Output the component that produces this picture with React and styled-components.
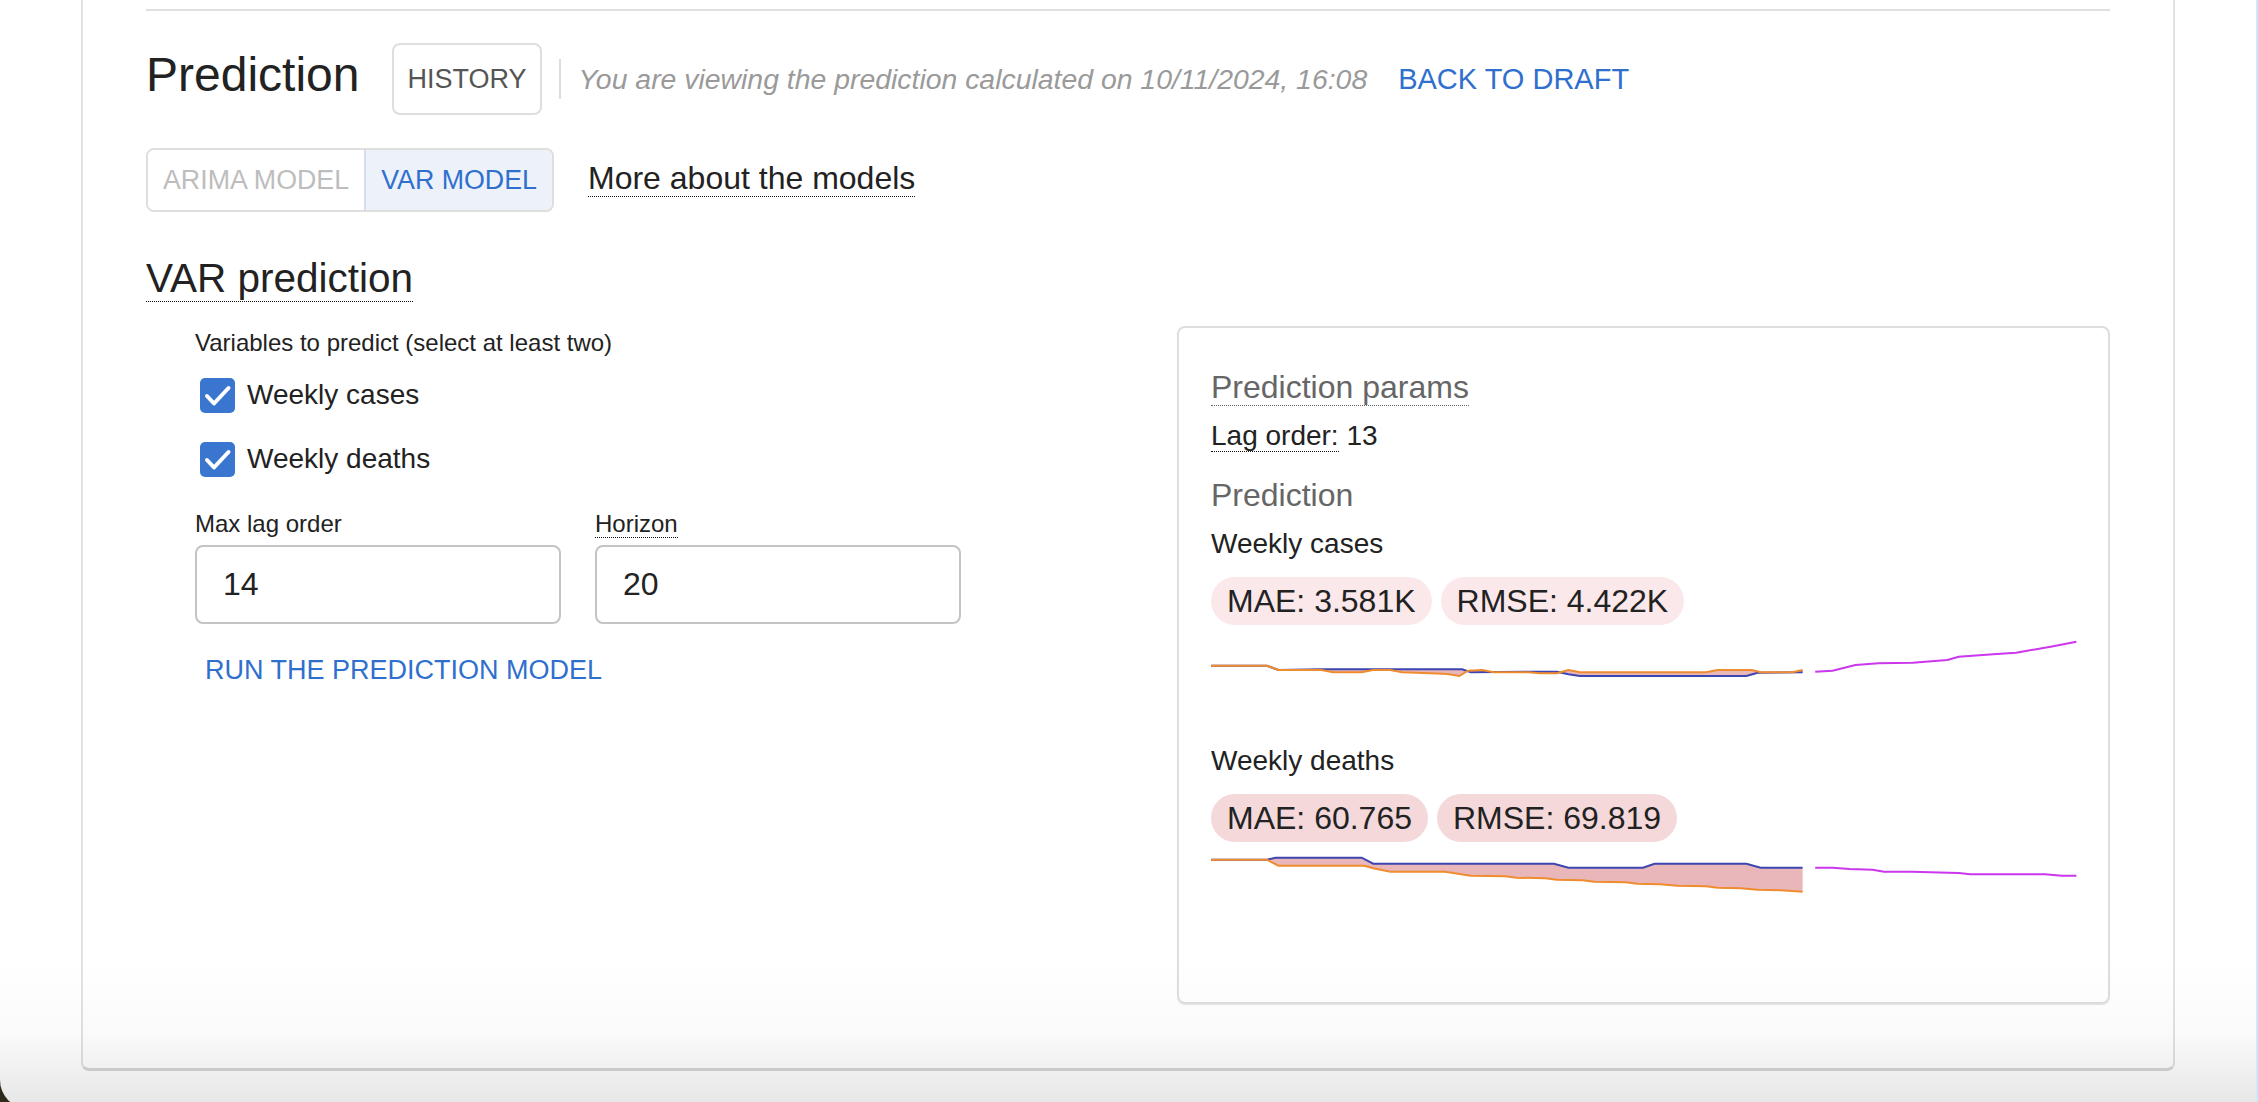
import styled, { createGlobalStyle } from 'styled-components';

const GlobalStyle = createGlobalStyle`
  html, body {
    margin: 0;
    overflow: hidden;
    background: #2e2a1c;
  }
  body {
    font-family: "Liberation Sans", Arial, sans-serif;
    color: #222;
  }
  * {
    box-sizing: border-box;
  }
`;

const casesChart = {
  actual: [
    [0, 37.7], [56, 37.7], [67.5, 42], [110.5, 41.3], [251, 41.3], [259.8, 44.3],
    [317.2, 43.7], [346, 43.7], [357.4, 46.3], [368.9, 48], [535.4, 48],
    [546.8, 44.7], [591.6, 44.3],
  ],
  predicted: [
    [0, 37.7], [56, 37.7], [67.5, 42], [110.5, 42], [122, 44.3], [150.7, 44.3],
    [162, 42], [179.4, 42], [191, 44.3], [219.6, 45.3], [236.8, 46], [248.3, 48],
    [257, 42.7], [271.3, 42], [282.8, 44.3], [317.2, 44.3], [328.7, 45.3],
    [346, 45.3], [357.4, 42], [368.9, 44.3], [495, 44.3], [506.6, 42], [541, 42],
    [549.7, 44.3], [581.3, 44.3], [591.6, 42],
  ],
  forecast: [
    [604.2, 43.7], [621.5, 42.7], [644.4, 37], [667.4, 35.3], [701.8, 34.7],
    [736.3, 32], [747.7, 28.7], [782.2, 26.3], [805.2, 24.7], [839.6, 18.7],
    [865.4, 13.7],
  ],
};

const deathsChart = {
  actual: [
    [0, 14.7], [56, 14.7], [64.6, 12.7], [150.7, 12.7], [162.2, 18.7], [343, 18.7],
    [357.4, 22.7], [432, 22.7], [443.5, 18.7], [535.4, 18.7], [549.7, 22.7],
    [591.6, 22.7],
  ],
  predicted: [
    [0, 14.7], [56, 14.7], [67.5, 20.7], [153.6, 20.7], [162.2, 23.3], [179.4, 26.7],
    [234, 26.7], [259.8, 30.7], [294.3, 31.3], [305.7, 32.7], [334.4, 33.3],
    [345.9, 34.7], [371.7, 35.3], [383.2, 36.7], [414.8, 37.3], [426.3, 38.7],
    [449.2, 39.3], [466.5, 40.7], [495.2, 41.3], [506.6, 42.7], [529.6, 43.3],
    [546.8, 44.7], [569.8, 45.3], [591.6, 46.7],
  ],
  forecast: [
    [604.2, 22.7], [621.5, 22.7], [638.7, 24], [661.6, 24.7], [673.1, 26.7],
    [701.8, 26.7], [719, 27.3], [747.7, 28], [759.2, 29.3], [833.9, 29.3],
    [851, 30.7], [865.4, 30.7],
  ],
};

const pts = (list) => list.map((p) => p.join(',')).join(' ');

const Sparkline = ({ data }) => (
  <ChartSvg width="866" height="100" viewBox="0 0 866 100">
    <polygon
      points={pts([...data.actual, ...[...data.predicted].reverse()])}
      fill="#e9b6b9"
    />
    <polyline points={pts(data.actual)} fill="none" stroke="#3d45b0" strokeWidth="2" />
    <polyline points={pts(data.predicted)} fill="none" stroke="#f08c30" strokeWidth="2" />
    <polyline points={pts(data.forecast)} fill="none" stroke="#cc36ec" strokeWidth="2" />
  </ChartSvg>
);

const CheckItem = ({ label }) => (
  <CheckRow>
    <CheckBox>
      <svg width="35" height="35" viewBox="0 0 35 35">
        <polyline
          points="7,18 14,25.5 28.5,10"
          fill="none"
          stroke="#fff"
          strokeWidth="4"
          strokeLinecap="round"
          strokeLinejoin="round"
        />
      </svg>
    </CheckBox>
    <CheckLabel>{label}</CheckLabel>
  </CheckRow>
);

const Series = ({ title, mae, rmse, tone, data }) => (
  <>
    <SeriesTitle>{title}</SeriesTitle>
    <Chips>
      <Chip $tone={tone}>MAE: {mae}</Chip>
      <Chip $tone={tone}>RMSE: {rmse}</Chip>
    </Chips>
    <Sparkline data={data} />
  </>
);

const App = () => {
  return (
    <Window>
      <GlobalStyle />
      <Panel>
        <Rule />
        <HeaderRow>
          <Title>Prediction</Title>
          <HistoryButton>HISTORY</HistoryButton>
          <Divider />
          <Note>You are viewing the prediction calculated on 10/11/2024, 16:08</Note>
          <BackLink>BACK TO DRAFT</BackLink>
        </HeaderRow>

        <TabsRow>
          <Tabs>
            <Tab>ARIMA MODEL</Tab>
            <Tab $active>VAR MODEL</Tab>
          </Tabs>
          <MoreLink>
            <Dotted>More about the models</Dotted>
          </MoreLink>
        </TabsRow>

        <SectionTitle>
          <Dotted>VAR prediction</Dotted>
        </SectionTitle>

        <Columns>
          <Form>
            <FieldLabel>Variables to predict (select at least two)</FieldLabel>
            <CheckItem label="Weekly cases" />
            <CheckItem label="Weekly deaths" />
            <Fields>
              <Field>
                <FieldLabel>Max lag order</FieldLabel>
                <Input defaultValue="14" />
              </Field>
              <Field>
                <FieldLabel>
                  <Dotted>Horizon</Dotted>
                </FieldLabel>
                <Input defaultValue="20" />
              </Field>
            </Fields>
            <RunButton>RUN THE PREDICTION MODEL</RunButton>
          </Form>

          <Card>
            <CardHeading>
              <Dotted $color="#666">Prediction params</Dotted>
            </CardHeading>
            <ParamLine>
              <Dotted>Lag order:</Dotted> 13
            </ParamLine>
            <CardHeading $gap={25}>Prediction</CardHeading>
            <Series
              title="Weekly cases"
              mae="3.581K"
              rmse="4.422K"
              tone="light"
              data={casesChart}
            />
            <Series
              title="Weekly deaths"
              mae="60.765"
              rmse="69.819"
              tone="strong"
              data={deathsChart}
            />
          </Card>
        </Columns>
      </Panel>
    </Window>
  );
};

export default App;

const Window = styled.div`
  position: relative;
  height: 1109px;
  padding: 0 81px 0 81px;
  background: #fff;
  border-right: 2px solid #cfe7f8;
  border-bottom-left-radius: 29px;
  overflow: hidden;

  &::after {
    content: '';
    position: absolute;
    left: 0;
    right: 0;
    bottom: 0;
    height: 150px;
    pointer-events: none;
    background: linear-gradient(
      rgba(0, 0, 0, 0) 0%,
      rgba(0, 0, 0, 0.02) 50%,
      rgba(0, 0, 0, 0.1) 100%
    );
  }
`;

const Panel = styled.section`
  padding: 9px 63px 64px;
  border: 2px solid #e2e2e2;
  border-top: none;
  border-bottom: 3px solid #d6d6d6;
  border-radius: 0 0 8px 8px;
`;

const Rule = styled.hr`
  margin: 0;
  height: 2px;
  border: none;
  background: #e0e0e0;
`;

const HeaderRow = styled.div`
  display: flex;
  align-items: center;
  margin-top: 32px;
  height: 72px;
`;

const Title = styled.h2`
  margin: 0 0 9px;
  font-size: 48px;
  line-height: 56px;
  font-weight: 400;
  color: #222;
`;

const HistoryButton = styled.button`
  margin-left: 33px;
  height: 72px;
  padding: 0 13px;
  border: 2px solid #dedede;
  border-radius: 8px;
  background: #fff;
  font-family: inherit;
  font-size: 27px;
  color: #555;
`;

const Divider = styled.span`
  width: 2px;
  height: 40px;
  margin: 0 18px 0 17px;
  background: #dedede;
`;

const Note = styled.span`
  font-size: 28.4px;
  font-style: italic;
  color: #9a9a9a;
`;

const BackLink = styled.a`
  margin-left: 31px;
  font-size: 29px;
  color: #2f6fce;
  cursor: pointer;
`;

const TabsRow = styled.div`
  display: flex;
  align-items: center;
  margin-top: 33px;
`;

const Tabs = styled.div`
  display: flex;
  height: 64px;
  border: 2px solid #dedede;
  border-radius: 8px;
  overflow: hidden;
`;

const Tab = styled.div`
  display: flex;
  align-items: center;
  padding: 0 15px;
  font-size: 26.8px;
  color: ${(p) => (p.$active ? '#2f6fce' : '#bdbdbd')};
  background: ${(p) => (p.$active ? '#edf2fa' : '#fff')};
  border-left: ${(p) => (p.$active ? '2px solid #d3dceb' : 'none')};
`;

const MoreLink = styled.div`
  margin: 0 0 4px 34px;
  font-size: 32px;
  line-height: 34px;
  color: #222;
`;

const Dotted = styled.span`
  border-bottom: 1px dotted ${(p) => p.$color || '#111'};
`;

const SectionTitle = styled.h3`
  margin: 44px 0 0;
  font-size: 40.5px;
  line-height: 44px;
  font-weight: 400;
  color: #222;
`;

const Columns = styled.div`
  display: grid;
  grid-template-columns: 1fr 933px;
  align-items: start;
  margin-top: 26px;
`;

const Form = styled.div`
  padding: 3px 0 0 49px;
`;

const FieldLabel = styled.div`
  font-size: 24px;
  line-height: 28px;
  color: #222;
`;

const CheckRow = styled.label`
  display: flex;
  align-items: center;
  gap: 12px;
  height: 36px;
  margin-top: 20px;

  & + & {
    margin-top: 28px;
  }
`;

const CheckBox = styled.span`
  display: flex;
  width: 35px;
  height: 35px;
  margin-left: 5px;
  border-radius: 5px;
  background: #3a75cf;
`;

const CheckLabel = styled.span`
  font-size: 28px;
  color: #222;
`;

const Fields = styled.div`
  display: flex;
  gap: 34px;
  margin-top: 33px;
`;

const Field = styled.div`
  display: flex;
  flex-direction: column;
  width: 366px;
`;

const Input = styled.input`
  margin-top: 7px;
  height: 79px;
  padding: 0 26px;
  border: 2px solid #c4c4c4;
  border-radius: 8px;
  font-family: inherit;
  font-size: 32px;
  color: #222;
  outline: none;
`;

const RunButton = styled.button`
  margin-top: 20px;
  padding: 10px;
  border: none;
  background: none;
  font-family: inherit;
  font-size: 27px;
  line-height: 32px;
  color: #2f6fce;
`;

const Card = styled.div`
  padding: 41px 32px 57px;
  border: 2px solid #dedede;
  border-radius: 8px;
  box-shadow: 0 1px 1px rgba(0, 0, 0, 0.1);
`;

const CardHeading = styled.div`
  margin-top: ${(p) => (p.$gap ? `${p.$gap}px` : '0')};
  font-size: 32px;
  line-height: 36px;
  color: #666;
`;

const ParamLine = styled.div`
  margin-top: 15px;
  font-size: 28px;
  line-height: 32px;
  color: #222;
`;

const SeriesTitle = styled.div`
  margin-top: 15px;
  font-size: 28px;
  line-height: 32px;
  color: #222;

  svg + & {
    margin-top: 17px;
  }
`;

const Chips = styled.div`
  display: flex;
  gap: 9px;
  margin-top: 17px;
`;

const Chip = styled.span`
  height: 48px;
  padding: 0 16px;
  border-radius: 24px;
  font-size: 32px;
  line-height: 48px;
  color: #222;
  background: ${(p) => (p.$tone === 'strong' ? '#f4d8da' : '#fbe8ea')};
`;

const ChartSvg = styled.svg`
  display: block;
  margin-top: 3px;
  overflow: visible;
`;
